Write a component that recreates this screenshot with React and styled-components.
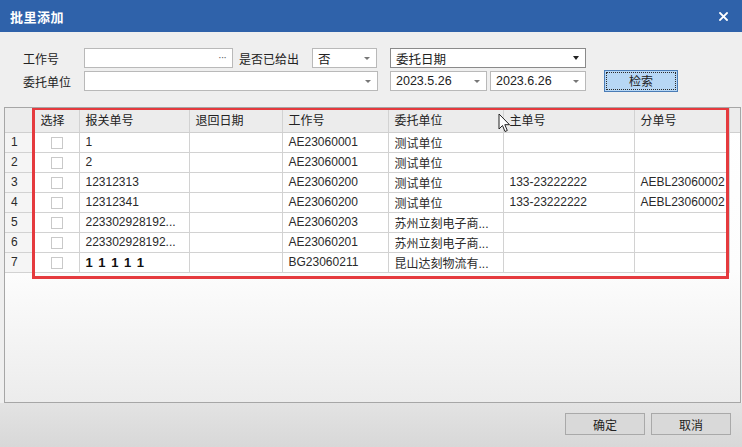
import React from "react";
import styled, { createGlobalStyle } from "styled-components";

const Global = createGlobalStyle`
  html, body { margin: 0; padding: 0; }
  body {
    width: 742px; height: 447px; overflow: hidden;
    font-family: "Liberation Sans", "Noto Sans CJK SC", sans-serif;
    font-size: 12px; color: #1f1f1f;
  }
  * { box-sizing: border-box; }
`;

const Dialog = styled.div`
  position: relative;
  width: 742px; height: 447px;
  display: flex; flex-direction: column;
  background: #efefef;
`;

const TitleBar = styled.div`
  height: 32px; flex: none;
  background: #2f62aa;
  display: flex; align-items: center; justify-content: space-between;
  padding: 0 14px 0 10px;
  color: #fff;
`;

const Title = styled.span`
  font-family: "Noto Sans CJK SC", sans-serif;
  font-weight: 700; font-size: 13px; letter-spacing: 0.5px;
`;

const Close = styled.svg`
  display: block;
`;

const Form = styled.div`
  padding: 16px 0 0 23px;
  display: flex; flex-direction: column; gap: 3px;
  height: 75px; flex: none;
`;

const FormRow = styled.div`
  display: flex; align-items: center; height: 20px;
`;

const Label = styled.span`
  width: ${p => p.w}px; flex: none;
  margin-left: ${p => p.ml || 0}px;
  font-family: "Noto Sans CJK SC", sans-serif; font-size: 12px;
  color: #222;
`;

const Field = styled.div`
  width: ${p => p.w}px; height: 20px; flex: none;
  margin-left: ${p => p.ml || 0}px;
  background: #fff; border: 1px solid ${p => (p.dark ? "#8a8a8a" : "#b9b9b9")};
  display: flex; align-items: center; justify-content: space-between;
  padding: 0 6px 0 5px;
  font-family: "Liberation Sans", "Noto Sans CJK SC", sans-serif; font-size: 12.5px;
  color: #222;
`;

const Dots = styled.span`
  color: #666; font-size: 11px; letter-spacing: -1px; margin-top: -3px;
`;

const Arrow = styled.span`
  width: 0; height: 0;
  border-left: ${p => (p.big ? 3.5 : 3)}px solid transparent;
  border-right: ${p => (p.big ? 3.5 : 3)}px solid transparent;
  border-top: ${p => (p.big ? 4 : 3)}px solid ${p => (p.big ? "#222" : "#777")};
`;

const SearchBtn = styled.button`
  width: 74px; height: 22px; flex: none; margin-left: 18px; margin-top: -1px;
  background: #b7d7f5; border: 1px solid #4a7cb6;
  outline: 1px dotted #2a2a2a; outline-offset: -3px;
  font-family: "Noto Sans CJK SC", sans-serif; font-size: 12px; color: #222;
  padding: 0;
`;

const Grid = styled.div`
  position: relative;
  margin: 0 1px 0 4px;
  height: 296px; flex: none;
  border: 1px solid #a6a6a6;
  background: linear-gradient(#ffffff 0%, #fdfdfd 55%, #ececec 100%);
  overflow: hidden;
`;

const Table = styled.table`
  border-collapse: collapse; table-layout: fixed;
  width: 735px;
`;

const Th = styled.th`
  height: 24px; padding: 0 0 0 6px;
  background: #ececec;
  border-right: 1px solid #d2d2d2; border-bottom: 1px solid #cfcfcf;
  text-align: left; font-weight: 400;
  font-family: "Noto Sans CJK SC", sans-serif; font-size: 12px; color: #222;
  &:last-child { border-right: none; }
`;

const Td = styled.td`
  height: 20px; padding: 0 0 0 6px;
  background: ${p => (p.rn ? "#f5f5f5" : "#fff")};
  border-right: 1px solid #d2d2d2; border-bottom: 1px solid #d2d2d2;
  white-space: nowrap; overflow: hidden;
  font-size: 12px; color: #2a2a2a;
  text-align: ${p => (p.center ? "center" : "left")};
  padding-left: ${p => (p.center ? 0 : 6)}px;
  ${p => p.bold && "font-weight:700; font-size:13px; letter-spacing:1px; color:#111;"}
  ${p => p.filler && "background: transparent; border-bottom: none; border-right: none;"}
`;

const Check = styled.span`
  display: inline-block; width: 12px; height: 12px; vertical-align: middle;
  border: 1px solid #c9c9c9; background: #fff;
`;

const Highlight = styled.div`
  position: absolute; left: 27px; top: -1px;
  width: 697px; height: 172px;
  border: 3px solid #e53a3e;
  pointer-events: none;
`;

const Cursor = styled.svg`
  position: absolute; left: 493px; top: 5px;
`;

const Footer = styled.div`
  flex: 1;
  background: linear-gradient(#e3e3e3, #d8d8d8);
  display: flex; justify-content: flex-end; align-items: flex-start;
  padding: 10px 11px 0 0; gap: 6px;
`;

const FootBtn = styled.button`
  width: 80px; height: 22px; padding: 0;
  background: #d9d9d9; border: 1px solid #a9a9a9;
  font-family: "Noto Sans CJK SC", sans-serif; font-size: 12px; color: #222;
`;

const cols = [29, 45, 110, 93, 106, 115, 131, 95, 11];
const headers = ["", "选择", "报关单号", "退回日期", "工作号", "委托单位", "主单号", "分单号", ""];
const rows = [
  ["1", "", "AE23060001", "测试单位", "", ""],
  ["2", "", "AE23060001", "测试单位", "", ""],
  ["12312313", "", "AE23060200", "测试单位", "133-23222222", "AEBL23060002"],
  ["12312341", "", "AE23060200", "测试单位", "133-23222222", "AEBL23060002"],
  ["223302928192...", "", "AE23060203", "苏州立刻电子商...", "", ""],
  ["223302928192...", "", "AE23060201", "苏州立刻电子商...", "", ""],
  ["1 1 1 1 1", "", "BG23060211", "昆山达刻物流有...", "", ""],
];

export default function App() {
  return (
    <Dialog>
      <Global />
      <TitleBar>
        <Title>批里添加</Title>
        <Close width="9" height="9" viewBox="0 0 9 9">
          <path d="M1 1 L8 8 M8 1 L1 8" stroke="#fff" strokeWidth="1.8" strokeLinecap="square" />
        </Close>
      </TitleBar>
      <Form>
        <FormRow>
          <Label w={61}>工作号</Label>
          <Field w={149}><span /><Dots>···</Dots></Field>
          <Label w={73} ml={6}>是否已给出</Label>
          <Field w={65}><span style={{ fontFamily: "Noto Sans CJK SC" }}>否</span><Arrow /></Field>
          <Field w={196} ml={13} dark><span style={{ fontFamily: "Noto Sans CJK SC" }}>委托日期</span><Arrow big /></Field>
        </FormRow>
        <FormRow>
          <Label w={61}>委托单位</Label>
          <Field w={294}><span /><Arrow /></Field>
          <Field w={97} ml={12}><span>2023.5.26</span><Arrow /></Field>
          <Field w={96} ml={3}><span>2023.6.26</span><Arrow /></Field>
          <SearchBtn>检索</SearchBtn>
        </FormRow>
      </Form>
      <Grid>
        <Table>
          <colgroup>
            {cols.map((w, i) => <col key={i} style={{ width: w }} />)}
          </colgroup>
          <thead>
            <tr>{headers.map((h, i) => <Th key={i}>{h}</Th>)}</tr>
          </thead>
          <tbody>
            {rows.map((r, i) => (
              <tr key={i}>
                <Td rn>{i + 1}</Td>
                <Td center><Check /></Td>
                <Td bold={i === 6}>{r[0]}</Td>
                <Td>{r[1]}</Td>
                <Td>{r[2]}</Td>
                <Td>{r[3]}</Td>
                <Td>{r[4]}</Td>
                <Td>{r[5]}</Td>
                <Td filler />
              </tr>
            ))}
          </tbody>
        </Table>
        <Highlight />
        <Cursor width="13" height="20" viewBox="0 0 13 20">
          <path d="M1 1 L1 16 L4.5 12.5 L7 18.5 L9.3 17.5 L6.8 11.7 L11.5 11.7 Z" fill="#fff" stroke="#222" strokeWidth="1" strokeLinejoin="round" />
        </Cursor>
      </Grid>
      <Footer>
        <FootBtn>确定</FootBtn>
        <FootBtn>取消</FootBtn>
      </Footer>
    </Dialog>
  );
}
